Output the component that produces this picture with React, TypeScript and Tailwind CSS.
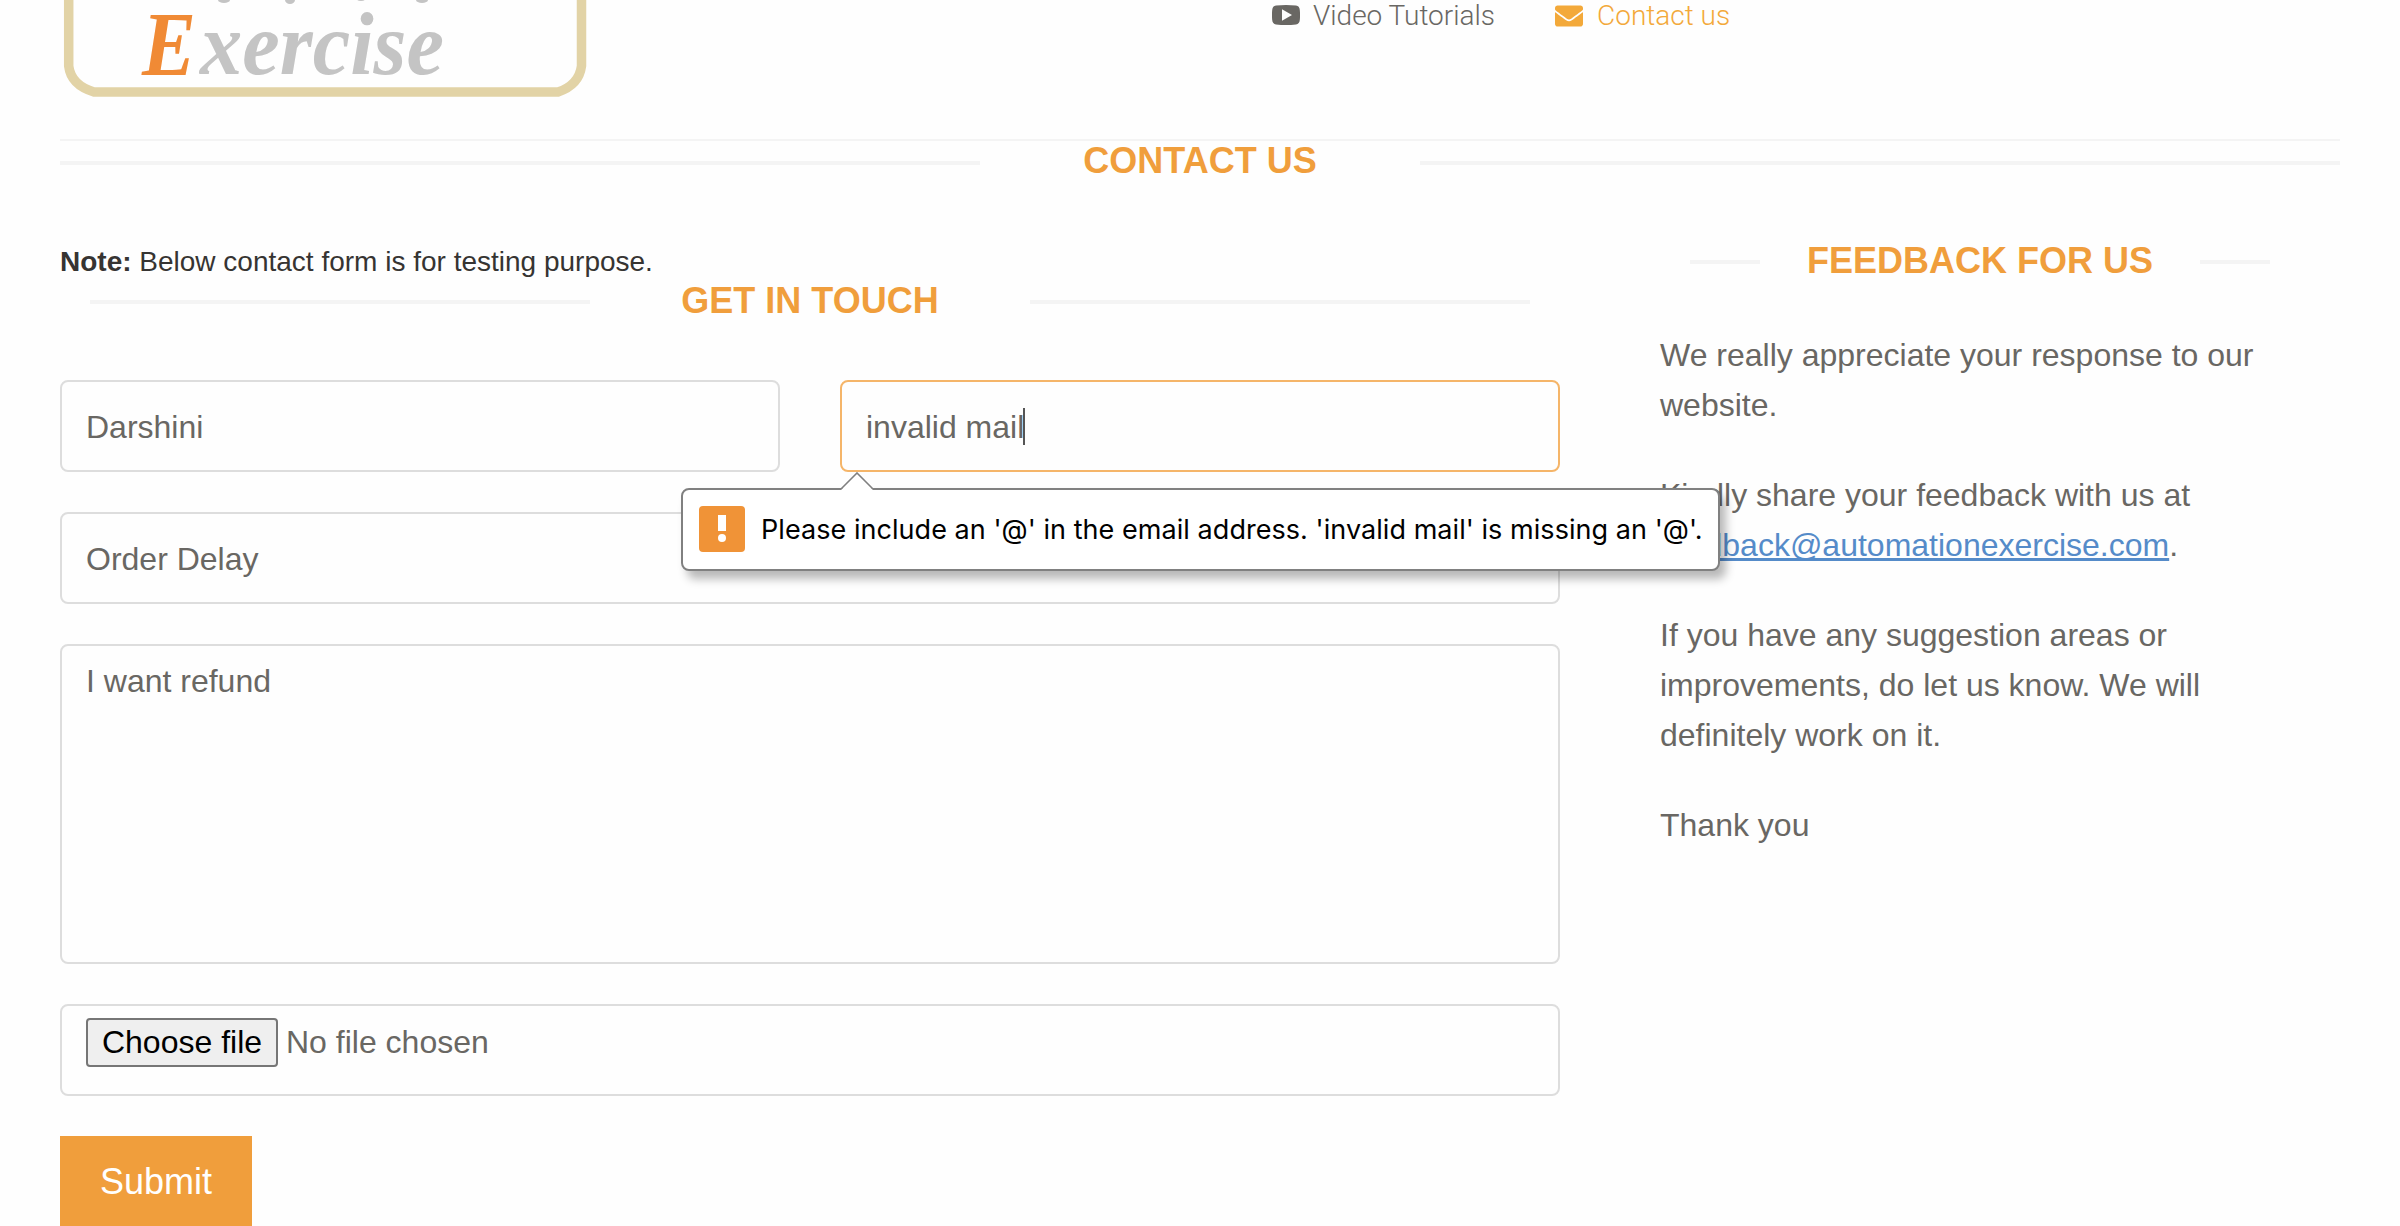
import React from "react";
import { FaEnvelope } from "react-icons/fa";

const sans = "font-['Liberation_Sans',Arial,sans-serif]";

function Logo() {
  return (
    <svg width="526" height="98" viewBox="62 0 526 98" className="block shrink-0">
      <path
        d="M68.700 -5V66Q71 85 94 92H558Q579 85 581.500 66V-5"
        fill="none"
        stroke="#e2d3a6"
        strokeWidth="9.500"
      />
      <g fill="#c4c4c4">
        <ellipse cx="224" cy="0" rx="6" ry="3" />
        <ellipse cx="290" cy="0" rx="5" ry="4" />
        <ellipse cx="361" cy="-1" rx="4" ry="2" />
        <ellipse cx="422" cy="0" rx="6" ry="3" />
      </g>
      <g fontFamily="'Liberation Serif', serif" fontStyle="italic" fontWeight="700">
        <text x="142" y="75" fontSize="90" fill="#f08a35" textLength="54" lengthAdjust="spacingAndGlyphs">
          E
        </text>
        <text x="200" y="74" fontSize="88" fill="#c4c4c4" textLength="244" lengthAdjust="spacingAndGlyphs">
          xercise
        </text>
      </g>
    </svg>
  );
}

function VideoIcon() {
  return (
    <svg width="28" height="20" viewBox="0 0 28 20" className="block">
      <path
        fillRule="evenodd"
        fill="#696763"
        d="M4 .6Q14-.6 24 .6Q27.500 1 27.800 5Q28.300 10 27.800 15Q27.500 19 24 19.400Q14 20.600 4 19.400Q.5 19 .2 15Q-.3 10 .2 5Q.5 1 4 .6ZM10 4.200V15.800L20 10Z"
      />
    </svg>
  );
}

function Heading({ children, className, line }: { children: React.ReactNode; className: string; line: string }) {
  return (
    <div className={`flex h-[44px] items-center justify-between ${className}`}>
      <div className={`h-1 bg-[#f4f4f4] ${line}`} />
      <h2 className="self-start whitespace-nowrap text-[36px] font-bold text-[#f09e3c]">{children}</h2>
      <div className={`h-1 bg-[#f4f4f4] ${line}`} />
    </div>
  );
}

function Field({ children, className = "" }: { children?: React.ReactNode; className?: string }) {
  return (
    <div className={`relative flex rounded-lg border-2 px-6 text-[32px] leading-[36px] text-[#696763] ${className}`}>
      {children}
    </div>
  );
}

function ValidationBubble() {
  return (
    <div className="absolute top-[106px] -left-[161px] z-10 flex h-[83px] w-[1039px] items-center rounded-lg border-2 border-[#808080] bg-white pl-4 shadow-[6px_8px_10px_rgba(0,0,0,0.28)]">
      <svg width="34" height="18" viewBox="0 0 34 18" className="absolute -top-[18px] left-[157px]">
        <path d="M1 18L17 1L33 18Z" fill="#fff" />
        <path d="M1 17L17 1L33 17" fill="none" stroke="#808080" strokeWidth="1.600" />
      </svg>
      <div className="mb-px flex h-[46px] w-[46px] shrink-0 flex-col items-center rounded bg-[#f09337] pt-[9px]">
        <div className="h-[16px] w-[8px] bg-white" />
        <div className="mt-[3px] h-[8px] w-[8px] rounded-full bg-white" />
      </div>
      <span className="ml-4 whitespace-nowrap font-['Inter',sans-serif] text-[27px] leading-[36px] tracking-[0.05px] text-black">
        Please include an '@' in the email address. 'invalid mail' is missing an '@'.
      </span>
    </div>
  );
}

export default function App() {
  return (
    <div className={`h-[1226px] w-[2400px] overflow-hidden bg-[#fefefe] px-[60px] ${sans}`}>
      <header className="flex h-[141px] items-start border-b-2 border-[#f4f4f4] pl-[2px]">
        <Logo />
        <nav className="ml-[684px] flex font-['Roboto',sans-serif] text-[28px] leading-[32px] font-light">
          <a className="flex w-[283px] text-[#696763]">
            <span className="mt-[5px] mr-[13px]">
              <VideoIcon />
            </span>
            <span>Video Tutorials</span>
          </a>
          <a className="flex text-[#f3a93a]">
            <FaEnvelope className="mt-[2px] mr-[14px] h-[28px] w-[28px]" />
            <span>Contact us</span>
          </a>
        </nav>
      </header>

      <Heading className="leading-[40px]" line="w-[920px]">
        CONTACT US
      </Heading>

      <div className="mt-[55px] flex">
        <main className="w-[1500px]">
          <p className="h-[40px] text-[28px] leading-[43px] text-[#363432]">
            <b>Note:</b> Below contact form is for testing purpose.
          </p>
          <Heading className="px-[30px] leading-[42px]" line="w-[500px]">
            GET IN TOUCH
          </Heading>
          <form className="mt-[56px] flex flex-col gap-10">
            <div className="flex gap-[60px]">
              <Field className="h-[92px] w-[720px] items-center border-[#ddd] pt-[2px]">Darshini</Field>
              <Field className="h-[92px] w-[720px] items-center border-[#f5b569] pt-[2px]">
                invalid mail
                <span className="mb-[2px] -ml-px h-[37px] w-[2px] bg-[#555]" />
                <ValidationBubble />
              </Field>
            </div>
            <Field className="h-[92px] items-center border-[#ddd] pt-[2px]">Order Delay</Field>
            <Field className="h-[320px] border-[#ddd] pt-[17px]">I want refund</Field>
            <Field className="h-[92px] border-[#ddd] pt-[12px]">
              <button
                type="button"
                className="h-[49px] w-[192px] rounded border-2 border-[#767676] bg-[#efefef] leading-[45px] text-black"
              >
                Choose file
              </button>
              <span className="ml-2 leading-[49px]">No file chosen</span>
            </Field>
            <button type="button" className="h-[92px] w-[192px] bg-[#f09e3c] text-[36px] text-white">
              Submit
            </button>
          </form>
        </main>

        <aside className="ml-[100px] w-[640px] text-[32px] leading-[50px] text-[#696763]">
          <Heading className="px-[30px] leading-[42px]" line="w-[70px]">
            FEEDBACK FOR US
          </Heading>
          <div className="mt-[46px] flex flex-col gap-10">
            <p>We really appreciate your response to our website.</p>
            <p>
              Kindly share your feedback with us at{" "}
              <a className="text-[#558bc9] underline decoration-[3px] underline-offset-[2px] [text-decoration-skip-ink:none]">
                feedback@automationexercise.com
              </a>
              .
            </p>
            <p>If you have any suggestion areas or improvements, do let us know. We will definitely work on it.</p>
            <p>Thank you</p>
          </div>
        </aside>
      </div>
    </div>
  );
}
